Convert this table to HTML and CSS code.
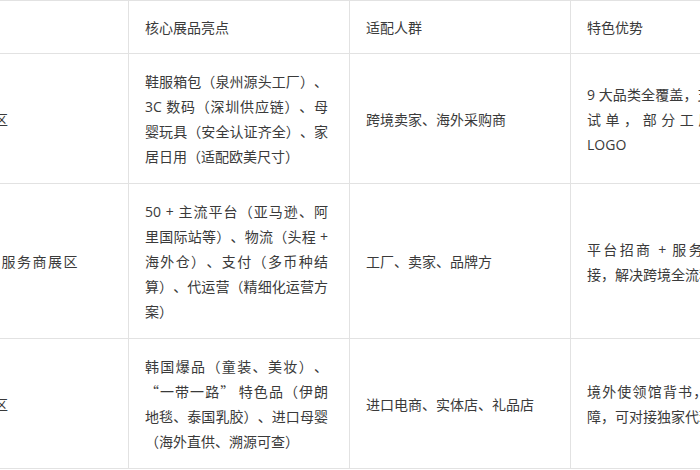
FILE: index.html
```html
<!DOCTYPE html>
<html lang="zh-CN">
<head>
<meta charset="utf-8">
<title>展区信息</title>
<link rel="stylesheet" href="styles.css">
</head>
<body>
<div class="frame">
  <table class="expo">
    <colgroup>
      <col class="c"><col class="c"><col class="c"><col class="c">
    </colgroup>
    <thead>
      <tr>
        <th>展区名称</th>
        <th>核心展品亮点</th>
        <th>适配人群</th>
        <th>特色优势</th>
      </tr>
    </thead>
    <tbody>
      <tr>
        <td>综合品类展区</td>
        <td class="just mid">鞋服箱包（泉州源头工厂）、3C 数码（深圳供应链）、母婴玩具（安全认证齐全）、家居日用（适配欧美尺寸）</td>
        <td>跨境卖家、海外采购商</td>
        <td class="just last">9 大品类全覆盖，支持小批量试单，部分工厂可定制 LOGO</td>
      </tr>
      <tr>
        <td class="spread">跨境全链路服务商展区</td>
        <td class="just mid">50 + 主流平台（亚马逊、阿里国际站等）、物流（头程 + 海外仓）、支付（多币种结算）、代运营（精细化运营方案）</td>
        <td>工厂、卖家、品牌方</td>
        <td class="just last">平台招商 + 服务商一站对接，解决跨境全流程难题</td>
      </tr>
      <tr>
        <td>进口特色展区</td>
        <td class="just mid">韩国爆品（童装、美妆）、<span class="q">“</span>一带一路<span class="q">”</span> 特色品（伊朗地毯、泰国乳胶）、进口母婴（海外直供、溯源可查）</td>
        <td>进口电商、实体店、礼品店</td>
        <td class="just last">境外使领馆背书，品质有保障，可对接独家代理渠道</td>
      </tr>
    </tbody>
  </table>
</div>
</body>
</html>
```

FILE: styles.css
```css
html, body {
  margin: 0;
  padding: 0;
  background: #ffffff;
}

.frame {
  width: 700px;
  height: 470px;
  overflow: hidden;
}

.expo {
  margin-left: -93px;
  width: 885px;
  table-layout: fixed;
  border-collapse: collapse;
  font-family: "Open Sans", "Noto Sans CJK SC", sans-serif;
  font-size: 14px;
  line-height: 25px;
  color: #3a3a3a;
  text-spacing-trim: space-all;
}

.expo .c {
  width: 221px;
}

.expo th,
.expo td {
  border: 1px solid #e2e2e2;
  padding: 14px 17px 13px 16px;
  text-align: left;
  vertical-align: middle;
  font-weight: normal;
}

.expo td {
  padding-top: 15px;
  padding-bottom: 14px;
}

.expo .just {
  text-align: justify;
}

.expo .spread {
  letter-spacing: 1.5px;
}

.expo .mid {
  padding-right: 21px;
}

.expo .last {
  padding-right: 23px;
}

.q {
  font-family: "Noto Sans CJK SC", sans-serif;
}
```
